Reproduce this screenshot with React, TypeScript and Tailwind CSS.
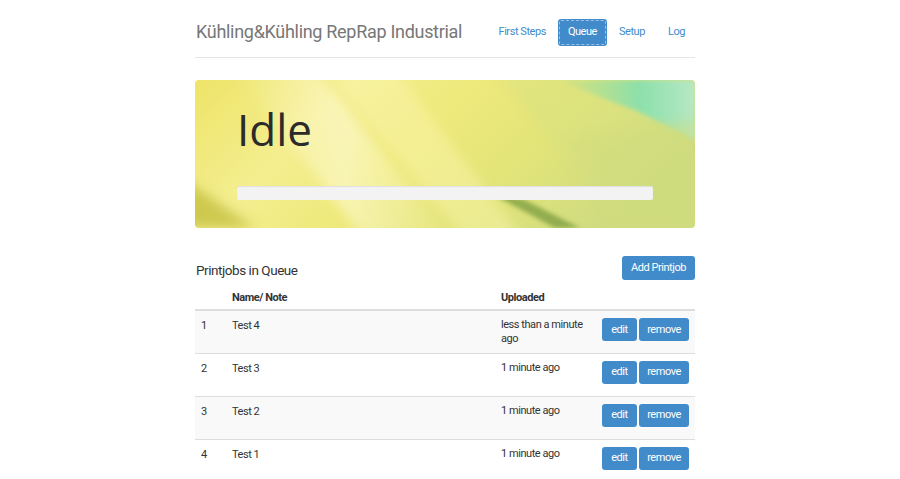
import React from "react";

const rows = [
  { n: 1, name: "Test 4", up: "less than a minute ago" },
  { n: 2, name: "Test 3", up: "1 minute ago" },
  { n: 3, name: "Test 2", up: "1 minute ago" },
  { n: 4, name: "Test 1", up: "1 minute ago" },
];

function Bg() {
  return (
    <svg className="absolute inset-0 w-full h-full" viewBox="0 0 500 148" preserveAspectRatio="none">
      <defs>
        <linearGradient id="base" x1="0" y1="0" x2="1" y2="0.3">
          <stop offset="0" stopColor="#eee468" />
          <stop offset="0.3" stopColor="#f4ee90" />
          <stop offset="0.5" stopColor="#efea7c" />
          <stop offset="0.75" stopColor="#e2e478" />
          <stop offset="1" stopColor="#d0dc80" />
        </linearGradient>
        <linearGradient id="streak" x1="0" y1="0" x2="1" y2="0">
          <stop offset="0" stopColor="#fffbe0" stopOpacity="0" />
          <stop offset="0.5" stopColor="#fffcdc" stopOpacity="0.55" />
          <stop offset="1" stopColor="#fffbe0" stopOpacity="0" />
        </linearGradient>
        <linearGradient id="teal" x1="0" y1="0" x2="1" y2="0">
          <stop offset="0" stopColor="#8ddc9c" stopOpacity="0" />
          <stop offset="0.6" stopColor="#84e0b0" stopOpacity="0.9" />
          <stop offset="1" stopColor="#b8e8c4" stopOpacity="1" />
        </linearGradient>
        <filter id="blur" x="-20%" y="-20%" width="140%" height="140%">
          <feGaussianBlur stdDeviation="6" />
        </filter>
        <filter id="blur2" x="-20%" y="-20%" width="140%" height="140%">
          <feGaussianBlur stdDeviation="2" />
        </filter>
      </defs>
      <rect width="500" height="148" fill="url(#base)" />
      <polygon points="40,-10 120,-10 260,160 170,160" fill="url(#streak)" filter="url(#blur)" />
      <polygon points="130,-10 200,-10 330,160 270,160" fill="#fbf6b0" opacity="0.45" filter="url(#blur)" />
      <polygon points="300,-10 500,-10 500,60 420,140" fill="#d6e084" opacity="0.4" filter="url(#blur)" />
      <polygon points="360,0 500,0 500,60 440,30" fill="url(#teal)" filter="url(#blur2)" />
      <polygon points="-10,100 60,148 -10,148" fill="#c4c040" opacity="0.8" filter="url(#blur)" />
      <polygon points="290,110 330,120 385,148 360,148" fill="#86a446" opacity="0.85" filter="url(#blur2)" />
      <polygon points="380,60 500,40 500,148 420,148" fill="#cedc7c" opacity="0.5" filter="url(#blur)" />
    </svg>
  );
}

const btn = "h-[23px] rounded-[3px] bg-[#428bca] text-white text-[11px]";

export default function App() {
  return (
    <div className="w-[890px] min-h-[479px] bg-white font-['Roboto',sans-serif] tracking-[-0.45px] text-[#333]">
      <div className="w-[500px] mx-auto">
        <div className="flex items-center justify-between h-[58px] border-b border-[#e5e5e5] whitespace-nowrap">
          <h3 className="text-[18px] tracking-[-0.3px] text-[#777] pl-[1px] pt-[5px]">Kühling&amp;Kühling RepRap Industrial</h3>
          <nav className="flex items-center gap-[1px] pt-[7px] text-[11px] text-[#428bca]">
            <span className="px-[11px] py-[7px]">First Steps</span>
            <span className="px-[10px] h-[27px] flex items-center rounded-[3px] bg-[#428bca] text-white outline-1 outline-dashed outline-[#9cc1e2] -outline-offset-2">Queue</span>
            <span className="px-[11px] py-[7px]">Setup</span>
            <span className="pl-[11px] pr-[10px] py-[7px]">Log</span>
          </nav>
        </div>

        <div className="relative mt-[22px] h-[148px] rounded-[4px] overflow-hidden">
          <Bg />
          <div className="relative pl-[42px] pr-[42px] pt-[24px]">
            <h1 className="font-['Open_Sans',sans-serif] tracking-normal text-[44px] leading-[1.15] text-[#2b2b2b]">Idle</h1>
            <div className="mt-[31px] h-[14px] rounded-[2px] bg-[#f3f3f3] shadow-[inset_0_1px_1px_rgba(0,0,0,0.08)]" />
          </div>
        </div>

        <div className="mt-[28px] flex items-center justify-between">
          <h4 className="text-[13.5px] text-[#333] pl-[1px] pt-[4px]">Printjobs in Queue</h4>
          <button className={btn + " h-[24px] px-[9px]"}>Add Printjob</button>
        </div>

        <table className="w-full mt-[8px] text-[11px] border-collapse table-fixed">
          <thead>
            <tr className="border-b-2 border-[#ddd]">
              <th className="w-[37px] h-[22px]"></th>
              <th className="text-left font-bold w-[269px] align-top pt-[2px]">Name/ Note</th>
              <th className="text-left font-bold w-[101px] align-top pt-[2px]">Uploaded</th>
              <th className="w-[93px]"></th>
            </tr>
          </thead>
          <tbody>
            {rows.map((r, i) => (
              <tr key={r.n} className={(i % 2 === 0 ? "bg-[#f9f9f9]" : "bg-white") + " border-t border-[#ddd] h-[43px]"}>
                <td className="align-top pl-[6px] pt-[7px]">{r.n}</td>
                <td className="align-top pt-[7px]">{r.name}</td>
                <td className="align-top pt-[7px] leading-[14px] pr-[8px]">{r.up}</td>
                <td className="align-top pt-[7px]">
                  <div className="flex gap-[2px]">
                    <button className={btn + " w-[35px]"}>edit</button>
                    <button className={btn + " w-[50px]"}>remove</button>
                  </div>
                </td>
              </tr>
            ))}
          </tbody>
        </table>
      </div>
    </div>
  );
}
